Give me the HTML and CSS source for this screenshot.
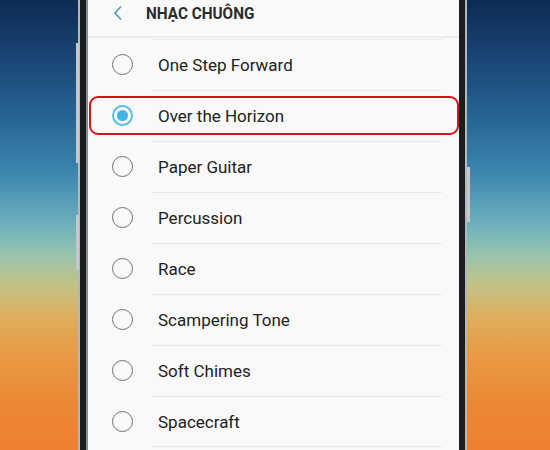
FILE: index.html
```html
<!DOCTYPE html>
<html lang="vi">

<head>
    <meta charset="UTF-8">
    <meta name="viewport" content="width=device-width, initial-scale=1.0">
    <title>Nhạc chuông</title>
    <link rel="stylesheet" href="styles.css">
</head>

<body>
    <div class="phone">
        <span class="key key-vol"></span>
        <span class="key key-bixby"></span>
        <span class="key key-power"></span>
        <div class="screen">
            <div class="header">
                <a href="#" class="back">
                    <svg width="12" height="16" viewBox="0 0 12 16">
                        <path d="M9 1.5 L3 8 L9 14.5" fill="none" stroke="#5a9cbb" stroke-width="1.8" />
                    </svg>
                </a>
                <h1 class="title">NHẠC CHUÔNG</h1>
            </div>
            <ul class="list">
                <li class="row">
                    <span class="radio"></span>
                    <span class="label">One Step Forward</span>
                </li>
                <li class="row selected">
                    <span class="radio"></span>
                    <span class="label">Over the Horizon</span>
                    <span class="mark"></span>
                </li>
                <li class="row">
                    <span class="radio"></span>
                    <span class="label">Paper Guitar</span>
                </li>
                <li class="row">
                    <span class="radio"></span>
                    <span class="label">Percussion</span>
                </li>
                <li class="row">
                    <span class="radio"></span>
                    <span class="label">Race</span>
                </li>
                <li class="row">
                    <span class="radio"></span>
                    <span class="label">Scampering Tone</span>
                </li>
                <li class="row">
                    <span class="radio"></span>
                    <span class="label">Soft Chimes</span>
                </li>
                <li class="row">
                    <span class="radio"></span>
                    <span class="label">Spacecraft</span>
                </li>
            </ul>
        </div>
    </div>
</body>

</html>
```

FILE: styles.css
```css
/* reset */
* {
    margin: 0;
    padding: 0;
    box-sizing: border-box;
}

ul {
    list-style: none;
}

a {
    display: block;
    text-decoration: none;
}

body {
    width: 550px;
    height: 450px;
    overflow: hidden;
    font-family: Roboto, "Noto Sans", sans-serif;
    background: linear-gradient(180deg,
            #0d2c52 0px,
            #1a4676 60px,
            #25608f 110px,
            #3a84ad 170px,
            #6eb1bd 225px,
            #98c4ac 255px,
            #c3c285 285px,
            #deae5c 318px,
            #e89a44 355px,
            #ec8834 400px,
            #ee8130 450px);
}

.phone {
    position: relative;
    margin-left: 78px;
    width: 389px;
    height: 450px;
    padding: 0 6px;
    background-color: #1c1d20;
    border-left: 2px solid #b4b8bc;
    border-right: 2px solid #b4b8bc;
}

.key {
    position: absolute;
    width: 3px;
    background-color: #c4c8cc;
}

.key-vol {
    left: -4px;
    top: 43px;
    height: 120px;
}

.key-bixby {
    left: -4px;
    top: 215px;
    height: 55px;
}

.key-power {
    right: -5px;
    top: 167px;
    height: 55px;
}

.screen {
    height: 100%;
    background-color: #f9f9f9;
    border-left: 2px solid #8a8d90;
    overflow: hidden;
}

.header {
    display: flex;
    align-items: center;
    height: 38px;
    padding: 0 0 10px 24px;
    border-bottom: 2px solid #ececec;
}

.back {
    width: 12px;
    height: 16px;
}

.title {
    margin-left: 22px;
    font-size: 17px;
    font-weight: 700;
    color: #2b2b2b;
    transform: scaleX(0.9);
    transform-origin: left center;
}

.list {
    padding-top: 1px;
}

.row {
    position: relative;
    display: flex;
    align-items: center;
    height: 51px;
}

.radio {
    flex: none;
    width: 21px;
    height: 21px;
    margin-left: 24px;
    border: 1.5px solid #727272;
    border-radius: 50%;
}

.label {
    display: flex;
    align-items: center;
    flex: 1;
    height: 100%;
    margin: 0 17px 0 19px;
    padding-left: 6px;
    border-top: 1px solid #e8e8e8;
    font-size: 17px;
    color: #222;
}

.row:last-child .label {
    border-bottom: 1px solid #e8e8e8;
}

.selected .radio {
    display: flex;
    align-items: center;
    justify-content: center;
    border: 2px solid #58bde8;
}

.selected .radio::after {
    content: "";
    width: 11px;
    height: 11px;
    border-radius: 50%;
    background-color: #45b0e2;
}

.mark {
    position: absolute;
    left: 1px;
    right: 0;
    top: 6px;
    bottom: 6px;
    border: 2px solid #d4121c;
    border-radius: 9px;
}
```
